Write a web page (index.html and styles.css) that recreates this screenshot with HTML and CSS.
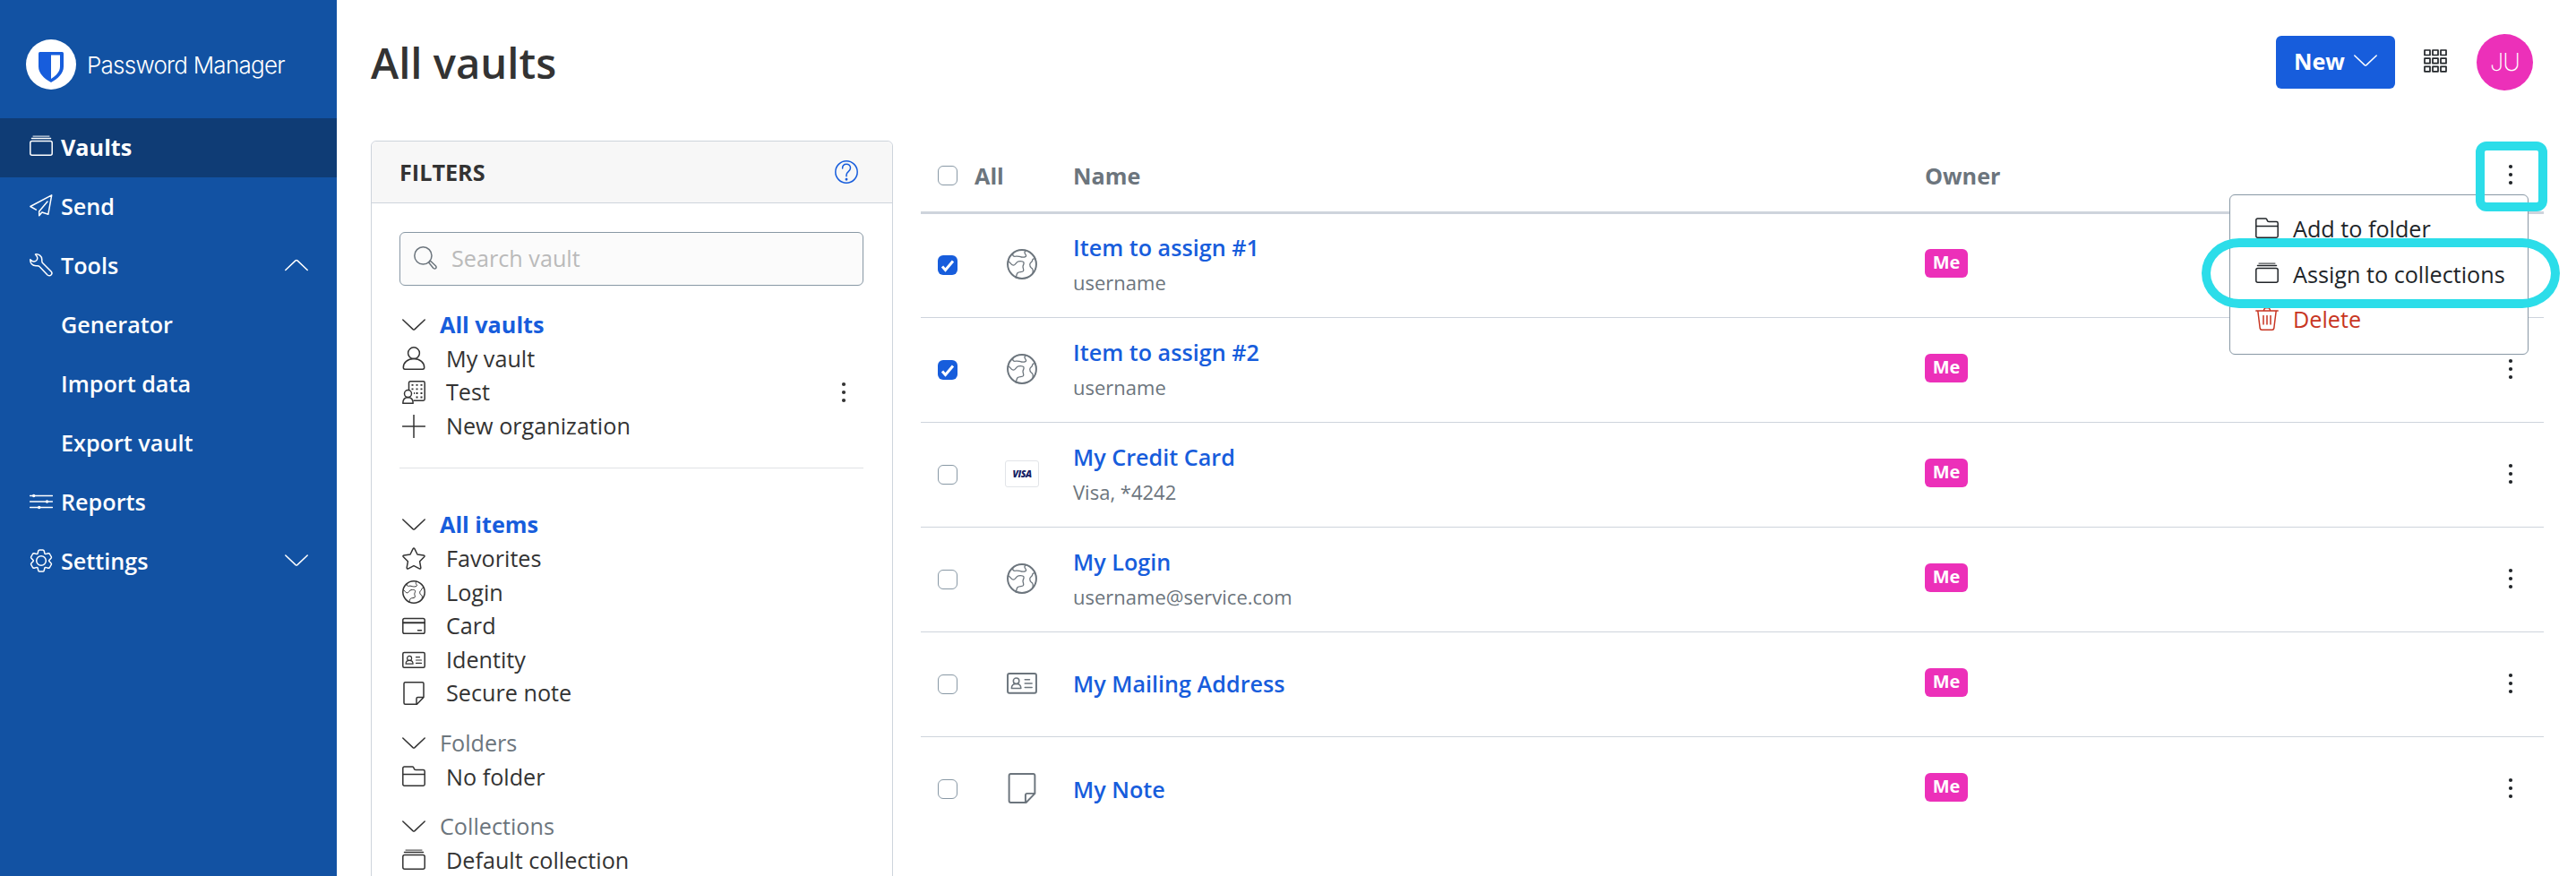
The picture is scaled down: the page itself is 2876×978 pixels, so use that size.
FILE: index.html
```
<!DOCTYPE html>
<html lang="en">
<head>
  <title>All vaults | Password Manager</title>
  <meta charset="UTF-8">
  <link rel="stylesheet" href="styles.css">
</head>
<body>
  <!-- Icon set -->
  <svg class="icon-defs">
    <symbol id="i-collection" viewBox="0 0 26 26">
      <path d="M4 1.1h18" stroke-width="1" /><path d="M2.5 3.6h21" />
      <rect x=".8" y="6.6" width="24.4" height="15.6" rx="2" />
    </symbol>
    <symbol id="i-send" viewBox="0 0 26 26">
      <path d="M7.3 17.2.9 13.5 24.7.9l-3.9 21.4-6.9-2.3-3.2 3.7v-4.8L20 8" />
    </symbol>
    <symbol id="i-wrench" viewBox="0 0 26 26">
      <path d="M6.5 1C10 .2 14 3 13.8 7c-.1 2 0 2.8.7 3.5L24 20c1.500 1.500 1 3 0 4s-2.500 1-4 0l-9-9.500c-.7-.8-1.500-.9-3.500-.7C3 14 .5 10.500.8 6.700 2 8 3.500 9.200 5 9c2-.2 3.800-2 3.800-4C8.800 3.500 7.500 2 6.500 1z" />
    </symbol>
    <symbol id="i-sliders" viewBox="0 0 26 26">
      <path d="M.5 6.500h25M.5 13h25M.5 19.500h25" />
      <g fill="currentColor" stroke="none"><circle cx="4.700" cy="6.500" r="1.700" /><circle cx="19.500" cy="13" r="1.700" /><circle cx="10.700" cy="19.500" r="1.700" /></g>
    </symbol>
    <symbol id="i-gear" viewBox="0 0 26 26">
      <path d="M9 5.200 9.800 2q.3-1.100 1.400-1.100h3.600q1.100 0 1.400 1.100l.8 3.200q.3.500.8.400l3-.8q1.100-.3 1.700.7l1.700 3q.6 1-.2 1.800l-2.200 2.300v.8l2.200 2.300q.8.800.2 1.800l-1.700 3q-.6 1-1.700.7l-3-.8q-.5-.1-.8.4L16.200 24q-.3 1.100-1.400 1.100h-3.600q-1.100 0-1.400-1.100L9 20.800q-.3-.5-.8-.4l-3 .8q-1.100.3-1.700-.7l-1.700-3q-.6-1 .2-1.800l2.200-2.300v-.8L2 10.300q-.8-.8-.2-1.800l1.700-3q.6-1 1.700-.7l3 .8q.5.100.8-.4z" />
      <circle cx="13" cy="13" r="5.300" />
    </symbol>
    <symbol id="i-down" viewBox="0 0 26 26"><path d="m.8 7 11.200 10.600q1 .8 2 0L25.200 7" /></symbol>
    <symbol id="i-up" viewBox="0 0 26 26"><path d="M.8 18.500 12 7.900q1-.8 2 0l11.200 10.600" /></symbol>
    <symbol id="i-search" viewBox="0 0 26 26">
      <circle cx="10.400" cy="10.400" r="9.600" />
      <path d="m16.600 18 1.700-2 6 5.800q1.400 1.600.3 2.700t-2.700 0z" />
    </symbol>
    <symbol id="i-help" viewBox="0 0 26 26">
      <circle cx="13" cy="13" r="12.200" />
      <path d="M8.600 9c0-3 1.800-4.800 4.400-4.800s4.500 1.800 4.500 4.300c0 3.900-4.500 4.200-4.500 7.700v1.500" />
      <circle cx="13" cy="21.200" r=".7" />
    </symbol>
    <symbol id="i-user" viewBox="0 0 26 26">
      <circle cx="13" cy="7.200" r="6.400" />
      <path d="M1.300 23.300c0-5.500 4.700-9.700 11.700-9.700s11.700 4.200 11.700 9.700q0 1.900-1.700 1.900H3q-1.700 0-1.700-1.900z" />
    </symbol>
    <symbol id="i-business" viewBox="0 0 26 26">
      <path d="M7.500 10V2.500Q7.500.8 9.200.8h14.300q1.700 0 1.700 1.700v18q0 1.700-1.700 1.700H13" />
      <path d="M10.500 4.800h2M15.500 4.800h2M20.500 4.800h2M10.500 9.400h2M15.500 9.400h2M20.500 9.400h2M13 14h1M15.500 14h2M20.500 14h2M15.500 18.500h2M20.500 18.500h2" stroke-width="1.800" stroke-linecap="butt" />
      <circle cx="6.500" cy="14.600" r="4" />
      <path d="M.8 25.200q0-6.500 5.700-6.500t5.700 6.500z" />
    </symbol>
    <symbol id="i-plus" viewBox="0 0 26 26"><path d="M13 .5v25M.5 13h25" /></symbol>
    <symbol id="i-star" viewBox="0 0 26 26">
      <path d="M12 1.800q1-1.600 2 0l3 6.200 7 1q1.800.4.600 1.800l-5 5 1.200 6.800q.1 1.900-1.600 1.200L13 20.600l-6.200 3.200q-1.700.7-1.600-1.200l1.200-6.800-5-5Q.2 9.400 2 9l7-1z" />
    </symbol>
    <symbol id="i-globe" viewBox="0 0 26 26">
      <circle cx="13" cy="13" r="12.200" />
      <g stroke-width="1"><path d="M5.200 3.600c-.5 2.200.8 3.100 2.400 2.700 2-.6 3 .4 4.800.6 1.500.2 3.900-.1 4.100-1.100.2-1.200-1.600-1.600-1.200-3.200l.8-1.400M1.300 10.600c1.700.4 2.200 3.200 4.200 3.300 2 .1 2.500-3.100 4.500-3.300 1.700-.2 3.900-.4 4.500.8.600 1.300-.9 2.500-.7 4 .2 1.500 1 2.500.3 3.500-.8 1-3.500.4-4.700 1.400-1.200 1-.9 2.600-1.600 4.300M24.400 8.400c-1.700-.4-2.400.2-2.600 1.600-.2 1.200-2.100 1.500-2.100 3.200 0 1.300.4 2.500 1.300 2.900 1.200.5 1.300 1 1.300 2.100v2.400" /></g>
    </symbol>
    <symbol id="i-card" viewBox="0 0 26 26">
      <rect x=".8" y="4.500" width="24.400" height="16.800" rx="1.800" />
      <path d="M.8 9.300h24.400" stroke-width="2" /><path d="M17.500 17.700h4" />
    </symbol>
    <symbol id="i-id" viewBox="0 0 26 26">
      <rect x=".8" y="4.600" width="24.400" height="16.600" rx="1.500" />
      <path d="M15.500 9.700h4M15.500 13h6M15.500 16.400h6M4.100 17.200q0-3.800 4-3.800t4 3.800z" stroke-width="1.200" />
      <circle cx="8.100" cy="10.900" r="2.500" stroke-width="1.200" />
    </symbol>
    <symbol id="i-note" viewBox="0 0 26 26">
      <path d="M3.500.8h19q1.500 0 1.500 1.500v15.200l-7.500 7.700h-13q-1.500 0-1.500-1.500V2.300Q2 .8 3.500.8zM16 25v-6q0-1.500 1.500-1.500H24" />
    </symbol>
    <symbol id="i-folder" viewBox="0 0 26 26">
      <path d="M2.500 2h9q1.200 0 1.400 1l.4 1.200q.4 1.300 1.700 1.300h8.500q1.700 0 1.700 1.700v14.300q0 1.700-1.700 1.700h-21q-1.700 0-1.700-1.700V3.700Q.8 2 2.500 2zM.8 10.600h24.400" />
    </symbol>
    <symbol id="i-trash" viewBox="0 0 26 26">
      <path d="M.8 4h24.400M2.800 4l2.400 19.500q.3 1.700 1.900 1.700h11.800q1.600 0 1.900-1.700L23.200 4M9.300 3.800l.8-2q.3-1 1.300-1h3.200q1 0 1.300 1l.8 2M9 9.500V19M13 9.500V19M17 9.500V19" />
    </symbol>
    <symbol id="i-dots" viewBox="0 0 26 26">
      <g fill="currentColor" stroke="none"><circle cx="13" cy="4" r="2.100" /><circle cx="13" cy="13" r="2.100" /><circle cx="13" cy="22" r="2.100" /></g>
    </symbol>
    <symbol id="i-grid" viewBox="0 0 26 26">
      <path d="M1 1h6v5.500H1zM10 1h6v5.500h-6zM19 1h6v5.500h-6zM1 10.200h6v5.500H1zM10 10.200h6v5.500h-6zM19 10.200h6v5.500h-6zM1 19.300h6v5.500H1zM10 19.300h6v5.500h-6zM19 19.300h6v5.500h-6z" stroke-width="1.700" />
    </symbol>
  </svg>

  <nav class="sidebar">
    <div class="brand">
      <svg class="brand-logo" viewBox="0 0 56 56">
        <circle cx="28" cy="28" r="28" fill="#fff" />
        <path d="M15.500 14h25q1.500 0 1.500 1.500V30c0 8-6 13.500-14 18-8-4.500-14-10-14-18V15.500q0-1.500 1.500-1.500z" fill="#175ddc" />
        <path d="M28 17.500h10V30c0 6-4 10-10 14z" fill="#fff" />
      </svg>
      <span class="brand-name">Password Manager</span>
    </div>
    <a class="nav-item active"><svg class="icon"><use href="#i-collection" /></svg><span>Vaults</span></a>
    <a class="nav-item"><svg class="icon"><use href="#i-send" /></svg><span>Send</span></a>
    <a class="nav-item"><svg class="icon"><use href="#i-wrench" /></svg><span>Tools</span><svg class="icon toggle"><use href="#i-up" /></svg></a>
    <a class="nav-item sub">Generator</a>
    <a class="nav-item sub">Import data</a>
    <a class="nav-item sub">Export vault</a>
    <a class="nav-item"><svg class="icon"><use href="#i-sliders" /></svg><span>Reports</span></a>
    <a class="nav-item"><svg class="icon"><use href="#i-gear" /></svg><span>Settings</span><svg class="icon toggle"><use href="#i-down" /></svg></a>
  </nav>

  <main class="content">
    <header class="page-header">
      <h1>All vaults</h1>
      <button class="btn-new"><span>New</span><svg class="icon"><use href="#i-down" /></svg></button>
      <svg class="icon switcher"><use href="#i-grid" /></svg>
      <div class="avatar">JU</div>
    </header>

    <div class="columns">
      <aside class="filters">
        <div class="filters-header">
          <span>FILTERS</span>
          <svg class="icon"><use href="#i-help" /></svg>
        </div>
        <div class="filters-body">
          <div class="search"><svg class="icon"><use href="#i-search" /></svg><span>Search vault</span></div>

          <div class="filter-group vaults">
            <div class="filter-title current"><svg class="icon"><use href="#i-down" /></svg>All vaults</div>
            <div class="filter"><svg class="icon"><use href="#i-user" /></svg>My vault</div>
            <div class="filter"><svg class="icon"><use href="#i-business" /></svg>Test<svg class="icon options"><use href="#i-dots" /></svg></div>
            <div class="filter"><svg class="icon"><use href="#i-plus" /></svg>New organization</div>
          </div>

          <div class="filter-group">
            <div class="filter-title current"><svg class="icon"><use href="#i-down" /></svg>All items</div>
            <div class="filter"><svg class="icon"><use href="#i-star" /></svg>Favorites</div>
            <div class="filter"><svg class="icon"><use href="#i-globe" /></svg>Login</div>
            <div class="filter"><svg class="icon"><use href="#i-card" /></svg>Card</div>
            <div class="filter"><svg class="icon"><use href="#i-id" /></svg>Identity</div>
            <div class="filter"><svg class="icon"><use href="#i-note" /></svg>Secure note</div>
          </div>

          <div class="filter-group">
            <div class="filter-title"><svg class="icon"><use href="#i-down" /></svg>Folders</div>
            <div class="filter"><svg class="icon"><use href="#i-folder" /></svg>No folder</div>
          </div>

          <div class="filter-group">
            <div class="filter-title"><svg class="icon"><use href="#i-down" /></svg>Collections</div>
            <div class="filter"><svg class="icon"><use href="#i-collection" /></svg>Default collection</div>
          </div>
        </div>
      </aside>

      <section class="items">
        <div class="row head">
          <span class="check"></span>
          <span>All</span>
          <span>Name</span>
          <span>Owner</span>
          <div class="options-cell">
            <svg class="icon"><use href="#i-dots" /></svg>
            <div class="menu">
              <div class="menu-item"><svg class="icon"><use href="#i-folder" /></svg>Add to folder</div>
              <div class="menu-item"><svg class="icon"><use href="#i-collection" /></svg>Assign to collections</div>
              <div class="menu-item danger"><svg class="icon"><use href="#i-trash" /></svg>Delete</div>
            </div>
            <div class="highlight-box"></div>
            <div class="highlight-pill"></div>
          </div>
        </div>

        <div class="row">
          <span class="check checked"><svg viewBox="0 0 22 22"><path d="m5 12.500 3.500 4 8.500-10" /></svg></span>
          <svg class="icon item-icon"><use href="#i-globe" /></svg>
          <div class="item-name"><a>Item to assign #1</a><small>username</small></div>
          <div><span class="badge">Me</span></div>
          <div class="options-cell"></div>
        </div>
        <div class="row">
          <span class="check checked"><svg viewBox="0 0 22 22"><path d="m5 12.500 3.500 4 8.500-10" /></svg></span>
          <svg class="icon item-icon"><use href="#i-globe" /></svg>
          <div class="item-name"><a>Item to assign #2</a><small>username</small></div>
          <div><span class="badge">Me</span></div>
          <div class="options-cell"><svg class="icon"><use href="#i-dots" /></svg></div>
        </div>
        <div class="row">
          <span class="check"></span>
          <span class="visa">VISA</span>
          <div class="item-name"><a>My Credit Card</a><small>Visa, *4242</small></div>
          <div><span class="badge">Me</span></div>
          <div class="options-cell"><svg class="icon"><use href="#i-dots" /></svg></div>
        </div>
        <div class="row">
          <span class="check"></span>
          <svg class="icon item-icon"><use href="#i-globe" /></svg>
          <div class="item-name"><a>My Login</a><small>username@service.com</small></div>
          <div><span class="badge">Me</span></div>
          <div class="options-cell"><svg class="icon"><use href="#i-dots" /></svg></div>
        </div>
        <div class="row">
          <span class="check"></span>
          <svg class="icon item-icon"><use href="#i-id" /></svg>
          <div class="item-name"><a>My Mailing Address</a></div>
          <div><span class="badge">Me</span></div>
          <div class="options-cell"><svg class="icon"><use href="#i-dots" /></svg></div>
        </div>
        <div class="row">
          <span class="check"></span>
          <svg class="icon item-icon"><use href="#i-note" /></svg>
          <div class="item-name"><a>My Note</a></div>
          <div><span class="badge">Me</span></div>
          <div class="options-cell"><svg class="icon"><use href="#i-dots" /></svg></div>
        </div>
      </section>
    </div>
  </main>
</body>
</html>
```
FILE: styles.css
```
* {
  box-sizing: border-box;
}
body {
  margin: 0;
  height: 978px;
  overflow: hidden;
  display: flex;
  font-family: "Open Sans", "Noto Sans", sans-serif;
  font-size: 25.2px;
  color: #333;
  background-color: #fff;
}
.icon-defs {
  position: absolute;
  width: 0;
  height: 0;
}
.icon {
  width: 26px;
  height: 26px;
  flex-shrink: 0;
  fill: none;
  stroke: currentColor;
  stroke-width: 1.5;
  stroke-linecap: round;
  stroke-linejoin: round;
}

/* Sidebar */
.sidebar {
  width: 376px;
  flex-shrink: 0;
  background-color: #1252a3;
  color: #fff;
}
.brand {
  height: 132px;
  padding: 12px 0 0 29px;
  display: flex;
  align-items: center;
  gap: 12px;
}
.brand-logo {
  width: 56px;
  height: 56px;
}
.brand-name {
  font-family: Inter, sans-serif;
  font-weight: 300;
  font-size: 26px;
  letter-spacing: -0.75px;
}
.nav-item {
  height: 66px;
  padding: 0 32px 3px 33px;
  display: flex;
  align-items: center;
  gap: 9px;
  font-weight: 600;
}
.nav-item.active {
  background-color: #0f3c75;
  font-weight: 700;
}
.nav-item.sub {
  padding-left: 68px;
}
.toggle {
  margin-left: auto;
}

/* Page header */
.content {
  flex-grow: 1;
  padding: 0 36px 0 38px;
}
.page-header {
  height: 157px;
  padding-top: 38px;
  display: flex;
  align-items: flex-start;
}
.page-header h1 {
  margin: -1px auto 0 0;
  font-size: 47.2px;
  font-weight: 600;
  line-height: 66px;
}
.btn-new {
  width: 133px;
  height: 59px;
  margin-top: 2px;
  padding: 0 20px 4px 20px;
  display: flex;
  align-items: center;
  justify-content: space-between;
  border: none;
  border-radius: 6px;
  background-color: #175ddc;
  color: #fff;
  font: inherit;
  font-weight: 700;
}
.switcher {
  margin: 17px 33px 0 32px;
  color: #212529;
}
.avatar {
  width: 63px;
  height: 63px;
  margin-right: 12px;
  border-radius: 50%;
  background-color: #ec30b9;
  color: #fff;
  font-family: Inter, sans-serif;
  font-size: 27px;
  font-weight: 200;
  letter-spacing: -0.8px;
  line-height: 63px;
  text-align: center;
}

/* Filters */
.columns {
  display: flex;
  align-items: flex-start;
  gap: 31px;
}
.filters {
  width: 583px;
  height: 860px;
  flex-shrink: 0;
  border: 1px solid #ced4dc;
  border-radius: 6px;
}
.filters-header {
  height: 69px;
  padding: 0 38px 0 31px;
  display: flex;
  align-items: center;
  justify-content: space-between;
  border-bottom: 1px solid #ced4dc;
  border-radius: 6px 6px 0 0;
  background-color: #f7f7f7;
  font-weight: 700;
}
.filters-header .icon {
  color: #175ddc;
}
.filters-body {
  padding: 32px 32px 0 31px;
}
.search {
  height: 60px;
  margin-bottom: 25px;
  padding: 0 15px 2px;
  display: flex;
  align-items: center;
  gap: 16px;
  border: 1px solid #8898a5;
  border-radius: 6px;
  background-color: #fbfbfb;
  color: #bababa;
}
.search .icon {
  color: #6c757d;
}
.filter-group {
  margin-bottom: 18px;
}
.filter-group.vaults {
  margin-bottom: 44px;
  padding-bottom: 28px;
  border-bottom: 1px solid #e0e2e5;
}
.filter-title,
.filter {
  height: 37.6px;
  padding-left: 3px;
  display: flex;
  align-items: center;
  gap: 23px;
  line-height: 37.6px;
}
.filter-title {
  gap: 16px;
  color: #6c757d;
}
.filter-title .icon {
  color: #333;
}
.filter-title.current {
  color: #175ddc;
  font-weight: 700;
}
.options {
  margin-left: auto;
  margin-right: 9px;
}

/* Item table */
.items {
  flex-grow: 1;
}
.row {
  height: 117px;
  padding-left: 19px;
  display: grid;
  grid-template-columns: 41px 110px 951px 1fr 76px;
  align-items: center;
  border-bottom: 1px solid #ced4dc;
}
.row:last-child {
  border-bottom: none;
}
.row.head {
  height: 82px;
  margin-bottom: -1px;
  padding-bottom: 2px;
  border-bottom: 3px solid #ced4dc;
  color: #6c757d;
  font-weight: 700;
}
.check {
  width: 22px;
  height: 22px;
  margin-bottom: 1px;
  border: 1px solid #8898a5;
  border-radius: 6px;
}
.row.head .check {
  margin-bottom: 0;
}
.check.checked {
  border: none;
  background-color: #175ddc;
}
.check svg {
  display: block;
  fill: none;
  stroke: #fff;
  stroke-width: 3;
}
.item-icon {
  width: 34px;
  height: 34px;
  margin: 0 0 3px 36px;
  color: #6c757d;
}
.visa {
  width: 38px;
  height: 30px;
  margin: 0 0 3px 34px;
  border: 1px solid #e2e4e8;
  border-radius: 3px;
  color: #142063;
  font-size: 10.5px;
  font-weight: 800;
  font-style: italic;
  letter-spacing: -0.5px;
  line-height: 28px;
  text-align: center;
}
.item-name {
  display: flex;
  flex-direction: column;
  padding-bottom: 1px;
}
.item-name a {
  color: #175ddc;
  font-weight: 600;
  line-height: 39px;
}
.item-name small {
  color: #6c757d;
  font-size: 22px;
  line-height: 39px;
}
.badge {
  display: block;
  width: 48px;
  height: 32px;
  margin-bottom: 5px;
  border-radius: 6px;
  background-color: #ec30b9;
  color: #fff;
  font-size: 20px;
  font-weight: 700;
  line-height: 29px;
  text-align: center;
}
.options-cell {
  position: relative;
  height: 26px;
  margin-bottom: 3px;
  padding-left: 26px;
  color: #212529;
  font-weight: 400;
}
.row.head .options-cell {
  margin-bottom: 1px;
}
.options-cell .icon {
  display: block;
}

/* Bulk actions menu */
.menu {
  position: absolute;
  top: 35px;
  right: 17px;
  width: 334px;
  height: 179px;
  padding: 12px 0 0 28px;
  border: 1px solid #8898a5;
  border-radius: 6px;
  background-color: #fff;
}
.menu-item {
  height: 50.5px;
  display: flex;
  align-items: center;
  gap: 16px;
  white-space: nowrap;
}
.menu-item.danger {
  color: #c83522;
}
.highlight-box {
  position: absolute;
  top: -24px;
  right: -4px;
  width: 80px;
  height: 78px;
  border: 10px solid #2cdde9;
  border-radius: 12px;
}
.highlight-pill {
  position: absolute;
  top: 84px;
  right: -18px;
  width: 400px;
  height: 78px;
  border: 10px solid #2cdde9;
  border-radius: 42px / 39px;
}
```
